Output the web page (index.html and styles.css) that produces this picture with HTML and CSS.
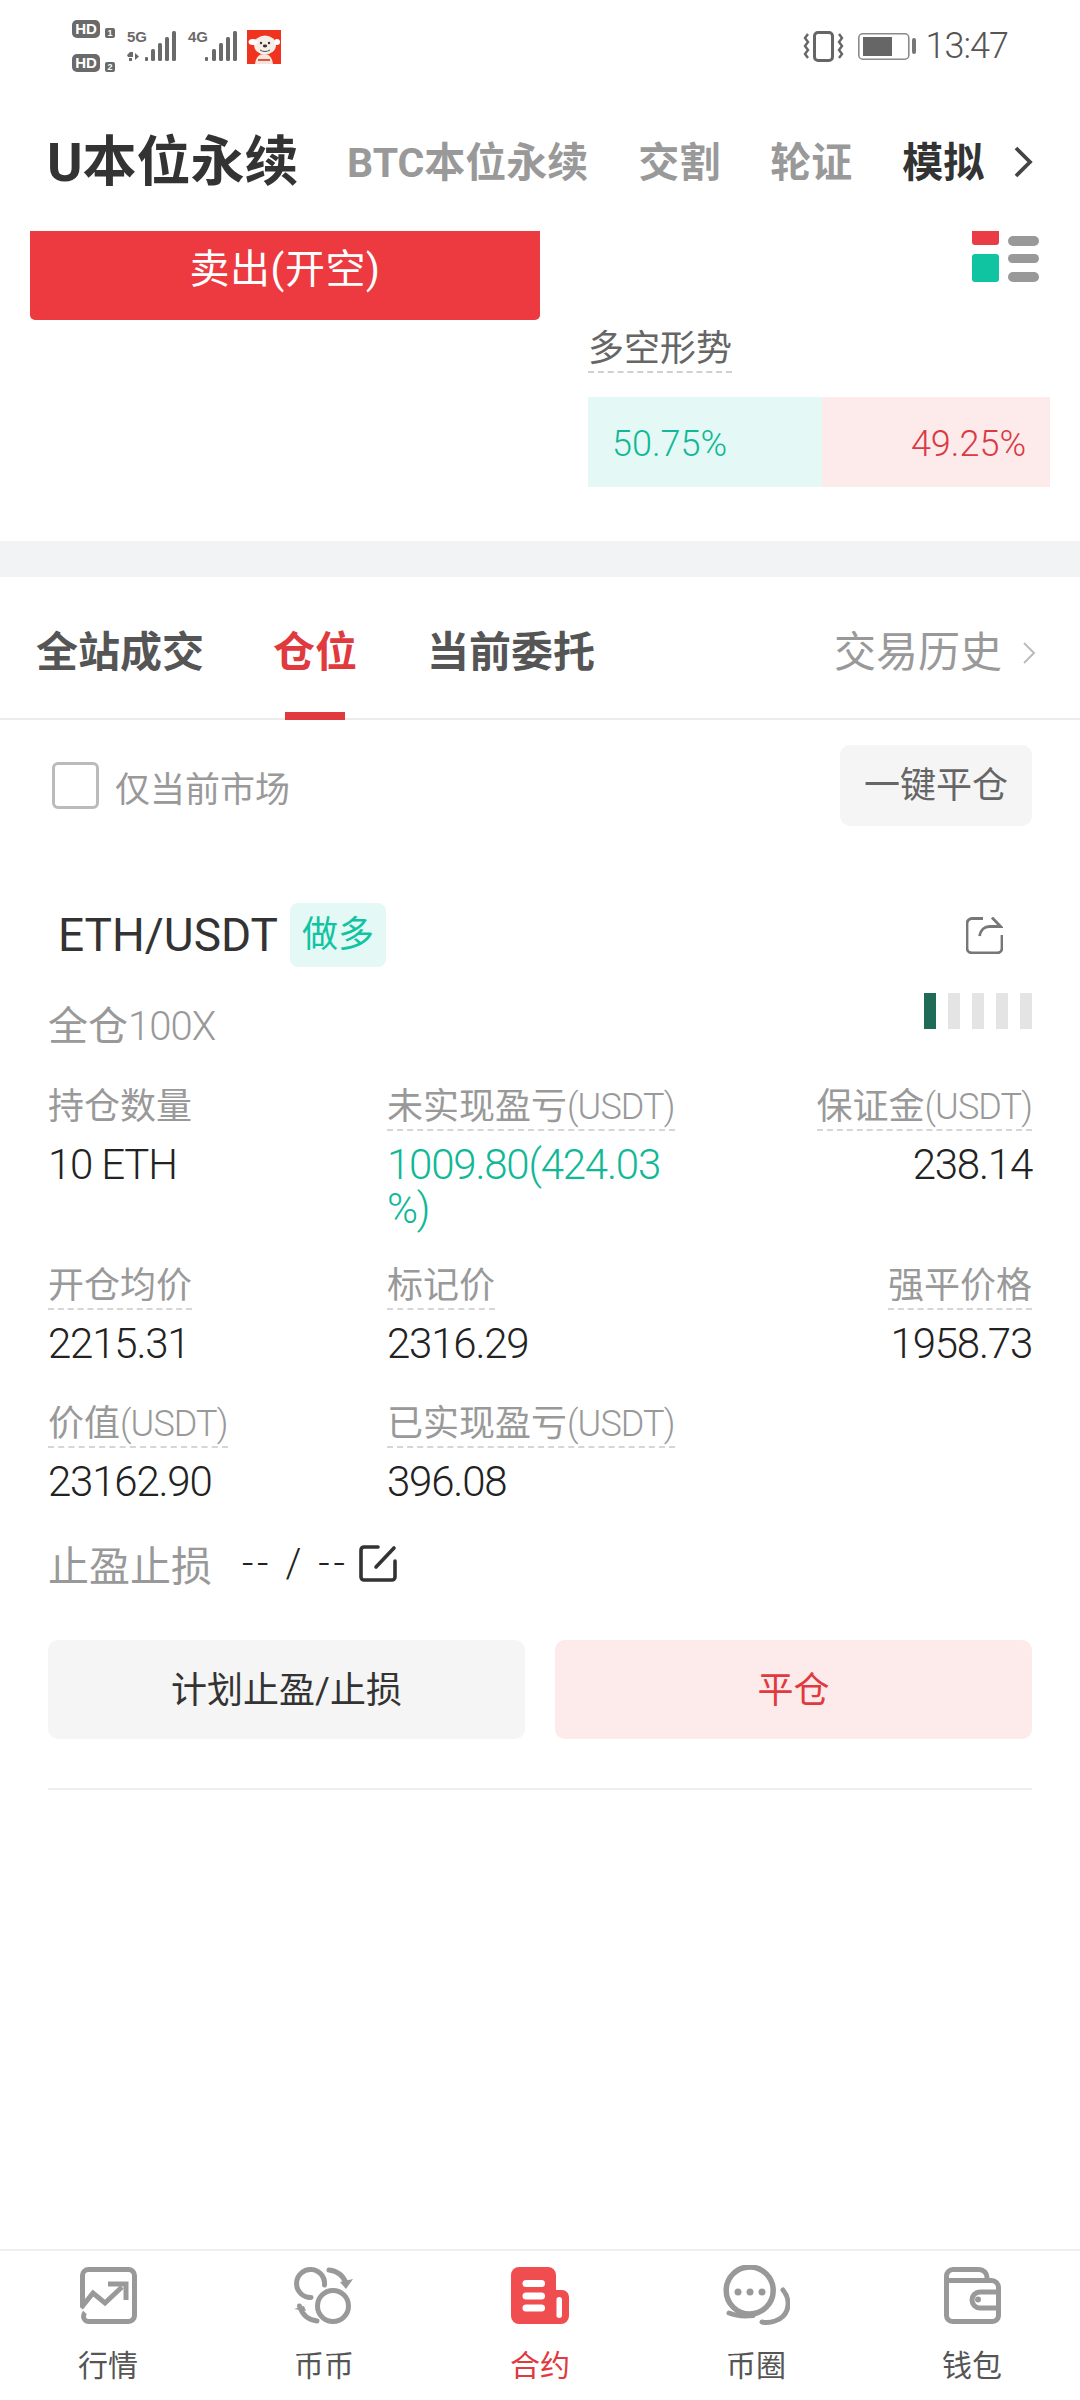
FILE: index.html
```html
<!DOCTYPE html>
<html lang="zh">
<head>
<meta charset="utf-8">
<title>U本位永续</title>
<link rel="stylesheet" href="styles.css">
</head>
<body>
<div class="phone">
  <div class="status">
    <div class="st-left">
      <div class="hd">
        <div class="hd-row"><span class="hd-pill">HD</span><span class="hd-num">1</span></div>
        <div class="hd-row"><span class="hd-pill">HD</span><span class="hd-num">2</span></div>
      </div>
      <div class="sig">
        <span class="net">5G</span>
        <svg class="bars" width="49" height="30" viewBox="0 0 49 30"><path d="M3 21h3v5H3zM0 24l3-3v5H1zM8 22l4 3.500-4 3.500zM2 27h3v3H2z" fill="#6a6a6a"/><rect x="18" y="26" width="3" height="4" rx="1" fill="#6a6a6a"/><rect x="24" y="18" width="4" height="12" rx="1.500" fill="#6a6a6a"/><rect x="31" y="12" width="4" height="18" rx="1.500" fill="#6a6a6a"/><rect x="38" y="6" width="4" height="24" rx="1.500" fill="#6a6a6a"/><rect x="45" y="0" width="4" height="30" rx="1.500" fill="#6a6a6a"/></svg>
      </div>
      <div class="sig">
        <span class="net">4G</span>
        <svg class="bars" width="49" height="30" viewBox="0 0 49 30"><rect x="17" y="26" width="3" height="4" rx="1" fill="#6a6a6a"/><rect x="24" y="18" width="4" height="12" rx="1.500" fill="#6a6a6a"/><rect x="31" y="12" width="4" height="18" rx="1.500" fill="#6a6a6a"/><rect x="38" y="6" width="4" height="24" rx="1.500" fill="#6a6a6a"/><rect x="45" y="0" width="4" height="30" rx="1.500" fill="#6a6a6a"/></svg>
      </div>
      <svg class="jd" width="34" height="34" viewBox="0 0 34 34"><rect width="34" height="34" fill="#f0331f"/><ellipse cx="18" cy="15" rx="11" ry="9.500" fill="#f6eee6"/><ellipse cx="6" cy="12" rx="4.500" ry="3" fill="#fff"/><ellipse cx="30" cy="12" rx="3" ry="3" fill="#fff"/><path d="M8 34c1-7 4-10 9-10s8 3 9 10z" fill="#f3e6da"/><circle cx="14" cy="13" r="1.200" fill="#333"/><circle cx="22" cy="13" r="1.200" fill="#333"/><ellipse cx="18" cy="16" rx="2.200" ry="1.400" fill="#333"/><path d="M13 20c3 2 7 2 10 0" fill="none" stroke="#555" stroke-width="1"/><path d="M11 30h12" stroke="#d4322a" stroke-width="1.600"/></svg>
    </div>
    <div class="st-right">
      <svg width="41" height="31" viewBox="0 0 41 31"><rect x="11.500" y="1.500" width="18" height="28" rx="3.500" fill="none" stroke="#666" stroke-width="3"/><path d="M5 3L2 7l3 4-3 4 3 4-3 4 3 4M36 3l3 4-3 4 3 4-3 4 3 4-3 4" fill="none" stroke="#666" stroke-width="2.400"/></svg>
      <svg class="batt" width="58" height="27" viewBox="0 0 58 27"><rect x="0.800" y="0.800" width="50" height="25.400" rx="4" fill="none" stroke="#8a8a8a" stroke-width="1.600"/><rect x="5" y="4" width="29" height="19" fill="#666"/><rect x="54" y="5" width="4" height="16" rx="2" fill="#777"/></svg>
      <span class="time">13:47</span>
    </div>
  </div>

  <div class="head">
    <span class="h-main">U本位永续</span>
    <span class="h-tab">BTC本位永续</span>
    <span class="h-tab">交割</span>
    <span class="h-tab">轮证</span>
    <span class="h-tab h-on">模拟</span>
    <svg class="h-chev" width="21" height="32" viewBox="0 0 21 32"><path d="M3 2l14 14L3 30" fill="none" stroke="#444" stroke-width="3.800"/></svg>
  </div>

  <div class="trade">
    <div class="sell">卖出(开空)</div>
    <div class="side">
      <svg class="depth" width="68" height="52" viewBox="0 0 68 52"><path d="M0 0h27v11a3 3 0 0 1-3 3H3a3 3 0 0 1-3-3z" fill="#e93c44"/><rect x="0" y="23" width="27" height="28" rx="3" fill="#10c4a2"/><rect x="36" y="5" width="31" height="10" rx="5" fill="#999"/><rect x="36" y="23" width="31" height="9" rx="4.500" fill="#999"/><rect x="36" y="41" width="31" height="10" rx="5" fill="#999"/></svg>
      <span class="ls-title">多空形势</span>
      <div class="ls-bar">
        <div class="ls-long">50.75%</div>
        <div class="ls-short">49.25%</div>
      </div>
    </div>
  </div>

  <div class="sep"></div>

  <div class="tabs">
    <span class="tab">全站成交</span>
    <span class="tab tab-on">仓位</span>
    <span class="tab">当前委托</span>
    <span class="hist">交易历史<svg width="14" height="24" viewBox="0 0 14 24"><path d="M2 2l10 10L2 22" fill="none" stroke="#bbb" stroke-width="2"/></svg></span>
  </div>

  <div class="filter">
    <span class="check"></span>
    <span class="check-label">仅当前市场</span>
    <span class="close-all">一键平仓</span>
  </div>

  <div class="pos">
    <div class="pos-head">
      <span class="sym">ETH/USDT</span>
      <span class="dir">做多</span>
      <svg class="share" width="37" height="37" viewBox="0 0 37 37"><path d="M17 1.500H6a5 5 0 0 0-5 5V31a5 5 0 0 0 5 5h25a5 5 0 0 0 5-5V18" fill="none" stroke="#777" stroke-width="2.800"/><path d="M13.500 19c1-6 5-9.500 10-9.500h11L26 .5" fill="none" stroke="#777" stroke-width="2.800"/></svg>
    </div>
    <div class="pos-sub">
      <span class="mode">全仓<span class="lat">100X</span></span>
      <span class="risk"><i class="r r-on"></i><i class="r"></i><i class="r"></i><i class="r"></i><i class="r"></i></span>
    </div>

    <div class="grid">
      <div class="cell"><span class="lbl">持仓数量</span><div class="val">10 ETH</div></div>
      <div class="cell"><span class="lbl dash">未实现盈亏<span class="lat">(USDT)</span></span><div class="val up">1009.80(424.03<br>%)</div></div>
      <div class="cell end"><span class="lbl dash">保证金<span class="lat">(USDT)</span></span><div class="val">238.14</div></div>

      <div class="cell"><span class="lbl dash">开仓均价</span><div class="val">2215.31</div></div>
      <div class="cell"><span class="lbl dash">标记价</span><div class="val">2316.29</div></div>
      <div class="cell end"><span class="lbl dash">强平价格</span><div class="val">1958.73</div></div>

      <div class="cell"><span class="lbl dash">价值<span class="lat">(USDT)</span></span><div class="val">23162.90</div></div>
      <div class="cell"><span class="lbl dash">已实现盈亏<span class="lat">(USDT)</span></span><div class="val">396.08</div></div>
      <div class="cell end"></div>
    </div>

    <div class="tp">
      <span class="tp-l">止盈止损</span>
      <span class="tp-v">-- / --</span>
      <svg width="38" height="37" viewBox="0 0 38 37"><path d="M19 2H5a3 3 0 0 0-3 3v27a3 3 0 0 0 3 3h28a3 3 0 0 0 3-3V16" fill="none" stroke="#333" stroke-width="3.600" stroke-linecap="round"/><path d="M17 22L35 3" fill="none" stroke="#333" stroke-width="3.600" stroke-linecap="round"/></svg>
    </div>

    <div class="acts">
      <span class="act">计划止盈/止损</span>
      <span class="act act-r">平仓</span>
    </div>
    <div class="pos-line"></div>
  </div>

  <nav class="nav">
    <div class="ni">
      <svg width="57" height="62" viewBox="0 -2 57 62"><path d="M2.500 39V8.500a6 6 0 0 1 6-6h40a6 6 0 0 1 6 6v40a6 6 0 0 1-6 6h-40a5 5 0 0 1-5-5c0-1.500.5-3 1.500-4" fill="none" stroke="#999" stroke-width="5"/><path d="M1 41l12-15 12 10 17-16" fill="none" stroke="#999" stroke-width="5"/><path d="M28 17h18v16" fill="none" stroke="#999" stroke-width="5"/></svg>
      <span>行情</span>
    </div>
    <div class="ni">
      <svg width="60" height="62" viewBox="0 -2 60 62"><circle cx="39" cy="39" r="15.500" fill="none" stroke="#999" stroke-width="5"/><path d="M30.500 18A14 14 0 1 0 17 30.500" fill="none" stroke="#999" stroke-width="5" stroke-linecap="round"/><path d="M35 3c8 1 14 5 17 13" fill="none" stroke="#999" stroke-width="5" stroke-linecap="round"/><path d="M46 15l13 -3-7 10z" fill="#999"/><path d="M23 54c-9-1-15-7-17.500-15" fill="none" stroke="#999" stroke-width="5" stroke-linecap="round"/><path d="M0 42l10-3 2 5z" fill="#999"/></svg>
      <span>币币</span>
    </div>
    <div class="ni ni-on">
      <svg width="58" height="62" viewBox="0 -2 58 62"><path d="M8 0h29a8 8 0 0 1 8 8v15h6a7 7 0 0 1 7 7v19a8 8 0 0 1-8 8H8a8 8 0 0 1-8-8V8a8 8 0 0 1 8-8z" fill="#ef4d50"/><rect x="11.500" y="13" width="22.500" height="7" rx="3.500" fill="#fff"/><rect x="11.500" y="25.500" width="22.500" height="7" rx="3.500" fill="#fff"/><rect x="11.500" y="37.500" width="22.500" height="7" rx="3.500" fill="#fff"/><rect x="45.500" y="30" width="5.500" height="21" rx="2.700" fill="#fff"/></svg>
      <span>合约</span>
    </div>
    <div class="ni">
      <svg width="67" height="62" viewBox="0 0 67 62"><circle cx="26.700" cy="25.500" r="23.500" fill="none" stroke="#999" stroke-width="5.500"/><path d="M6 48c6 2.500 15 3.500 24 2.500" fill="none" stroke="#999" stroke-width="5" stroke-linecap="round"/><circle cx="15" cy="27" r="3.500" fill="#999"/><circle cx="27" cy="27" r="3.500" fill="#999"/><circle cx="39" cy="27" r="3.500" fill="#999"/><path d="M60 25c5 6 6 14 4 20-2 6-6 9-12 11-4 1.500-9 2-13 1" fill="none" stroke="#999" stroke-width="5" stroke-linecap="round"/></svg>
      <span>币圈</span>
    </div>
    <div class="ni">
      <svg width="57" height="62" viewBox="0 -2 57 62"><path d="M2.500 20V9a6.500 6.500 0 0 1 6.500-6.500h26a8 8 0 0 1 8 8V14" fill="none" stroke="#999" stroke-width="5"/><path d="M2.500 13.500h45a7 7 0 0 1 7 7v28a6 6 0 0 1-6 6H8.500a6 6 0 0 1-6-6z" fill="none" stroke="#999" stroke-width="5"/><path d="M54 25H36a8 8 0 0 0 0 16h18" fill="none" stroke="#999" stroke-width="5"/><circle cx="34" cy="32.500" r="3" fill="#999"/></svg>
      <span>钱包</span>
    </div>
  </nav>
</div>
</body>
</html>
```

FILE: styles.css
```css
* { box-sizing: border-box; }
html, body { margin: 0; padding: 0; background: #fff; }
body { font-family: Roboto, "Noto Sans CJK SC", "Noto Sans", sans-serif; color: #333; }
.phone { width: 1080px; height: 2400px; display: flex; flex-direction: column; overflow: hidden; background: #fff; }
.lat { font-weight: 300; letter-spacing: -0.9px; }

/* status bar */
.status { height: 90px; flex: none; display: flex; justify-content: space-between; align-items: center; padding: 2px 72px 0 72px; }
.st-left { display: flex; align-items: center; }
.hd { display: flex; flex-direction: column; gap: 16px; width: 43px; }
.hd-row { display: flex; align-items: flex-end; gap: 5px; height: 18px; }
.hd-pill { background: #6a6a6a; color: #fff; font: 700 15px/18px "Liberation Sans", sans-serif; border-radius: 5px; width: 28px; height: 18px; text-align: center; }
.hd-num { background: #6a6a6a; color: #fff; font: 700 9px/10px "Liberation Sans", sans-serif; width: 10px; height: 10px; border-radius: 2px; text-align: center; }
.sig { position: relative; width: 49px; height: 30px; margin-left: 12px; }
.net { position: absolute; left: 0; top: 0; font: 700 15px/12px "Liberation Sans Narrow", "Liberation Sans", sans-serif; color: #6a6a6a; }
.bars { display: block; }
.jd { margin-left: 10px; margin-top: 2px; }
.st-right { display: flex; align-items: center; }
.batt { margin-left: 14px; }
.time { font-size: 36px; font-weight: 300; letter-spacing: -1px; line-height: 40px; color: #555; margin-left: 10px; }

/* header tabs */
.head { height: 141px; flex: none; display: flex; align-items: center; padding: 4px 0 0 47px; white-space: nowrap; }
.h-main { font-size: 54px; font-weight: 700; color: #333; line-height: 70px; width: 300px; }
.h-tab { font-size: 41px; font-weight: 700; color: #999; line-height: 60px; margin-right: 50px; }
.h-on { color: #333; margin-right: 29px; }
.h-chev { margin-top: -2px; }

/* trading panel */
.trade { height: 310px; flex: none; display: flex; justify-content: space-between; padding: 0 30px; }
.sell { width: 510px; height: 89px; background: #ec3a40; color: #fff; font-size: 40px; letter-spacing: .6px; line-height: 78px; text-align: center; border-radius: 0 0 5px 5px; }
.side { width: 462px; display: flex; flex-direction: column; align-items: flex-start; }
.depth { align-self: flex-end; margin-right: 10px; }
.ls-title { font-size: 36px; line-height: 44px; color: #666; margin-top: 44px; border-bottom: 2px dashed #d0d0d0; }
.ls-bar { display: flex; width: 462px; height: 90px; margin-top: 24px; font-size: 36px; font-weight: 300; line-height: 94px; }
.ls-long { width: 234px; background: #e4f8f5; color: #10b896; padding-left: 24px; }
.ls-short { flex: 1; background: #fdeaea; color: #d93a44; text-align: right; padding-right: 24px; }
.sep { height: 36px; flex: none; background: #f2f3f5; }

/* list tabs */
.tabs { height: 143px; flex: none; display: flex; align-items: center; padding: 10px 44px 0 36px; border-bottom: 2px solid #ececec; }
.tab { position: relative; font-size: 42px; font-weight: 700; color: #555; margin-right: 70px; line-height: 60px; }
.tab-on { color: #e03a3e; }
.tab:first-child { margin-right: 69px; }
.tab-on::after { content: ""; position: absolute; left: 12px; width: 60px; height: 8px; bottom: -37px; background: #e03a3e; }
.hist { margin-left: auto; font-size: 42px; color: #999; line-height: 60px; display: flex; align-items: center; gap: 20px; }

/* filter */
.filter { height: 130px; flex: none; display: flex; align-items: center; padding: 0 48px 0 52px; }
.check { width: 47px; height: 47px; border: 3px solid #bbb; border-radius: 6px; }
.check-label { font-size: 35px; color: #999; margin-left: 16px; padding-top: 2px; }
.close-all { margin-left: auto; width: 192px; height: 81px; border-radius: 10px; background: #f5f5f5; color: #666; font-size: 36px; line-height: 83px; text-align: center; }

/* position */
.pos { flex: 1; padding: 0 48px; }
.pos-head { display: flex; align-items: center; height: 64px; margin-top: 53px; padding-left: 10px; }
.sym { font-size: 46px; color: #333; line-height: 64px; }
.dir { margin-left: 12px; width: 96px; height: 64px; background: #e4f8f5; color: #10c4a2; font-size: 36px; line-height: 64px; text-align: center; border-radius: 8px; }
.share { margin-left: auto; margin-right: 29px; }
.pos-sub { display: flex; justify-content: space-between; align-items: flex-start; margin-top: 26px; height: 64px; }
.mode { font-size: 40px; color: #999; line-height: 60px; margin-top: 4px; }
.risk { display: flex; gap: 12px; }
.r { width: 12px; height: 36px; background: #e4e4e4; display: block; }
.r-on { background: #1f6b57; }

.grid { display: grid; grid-template-columns: 339px 1fr 300px; grid-template-rows: 179px 138px 131px; margin-top: 28px; }
.cell { display: flex; flex-direction: column; align-items: flex-start; }
.end { align-items: flex-end; }
.lbl { font-size: 36px; line-height: 44px; color: #999; white-space: nowrap; border-bottom: 2px solid transparent; }
.lbl.dash { border-bottom: 2px dashed #d6d6d6; }
.val { font-size: 42px; font-weight: 300; letter-spacing: -1.2px; line-height: 44px; color: #222; margin-top: 12px; white-space: nowrap; }
.end .val { text-align: right; }
.up { color: #10b896; }

.tp { display: flex; align-items: center; height: 60px; }
.tp-l { font-size: 41px; color: #999; }
.tp-v { font-size: 40px; font-weight: 300; letter-spacing: 3.6px; color: #222; margin-left: 30px; margin-right: 11px; }
.acts { display: flex; justify-content: space-between; margin-top: 47px; }
.act { width: 477px; height: 99px; border-radius: 10px; background: #f5f5f5; color: #333; font-size: 36px; line-height: 102px; text-align: center; }
.act-r { background: #fdeaea; color: #e03a3e; }
.pos-line { height: 2px; background: #eee; margin-top: 49px; }

/* bottom nav */
.nav { height: 151px; flex: none; display: grid; grid-template-columns: repeat(5, 216px); border-top: 2px solid #efefef; }
.ni { display: flex; flex-direction: column; align-items: center; padding-top: 14px; font-size: 30px; line-height: 40px; color: #555; }
.ni span { margin-top: 19px; }
.ni-on { color: #e03a3e; }
```
